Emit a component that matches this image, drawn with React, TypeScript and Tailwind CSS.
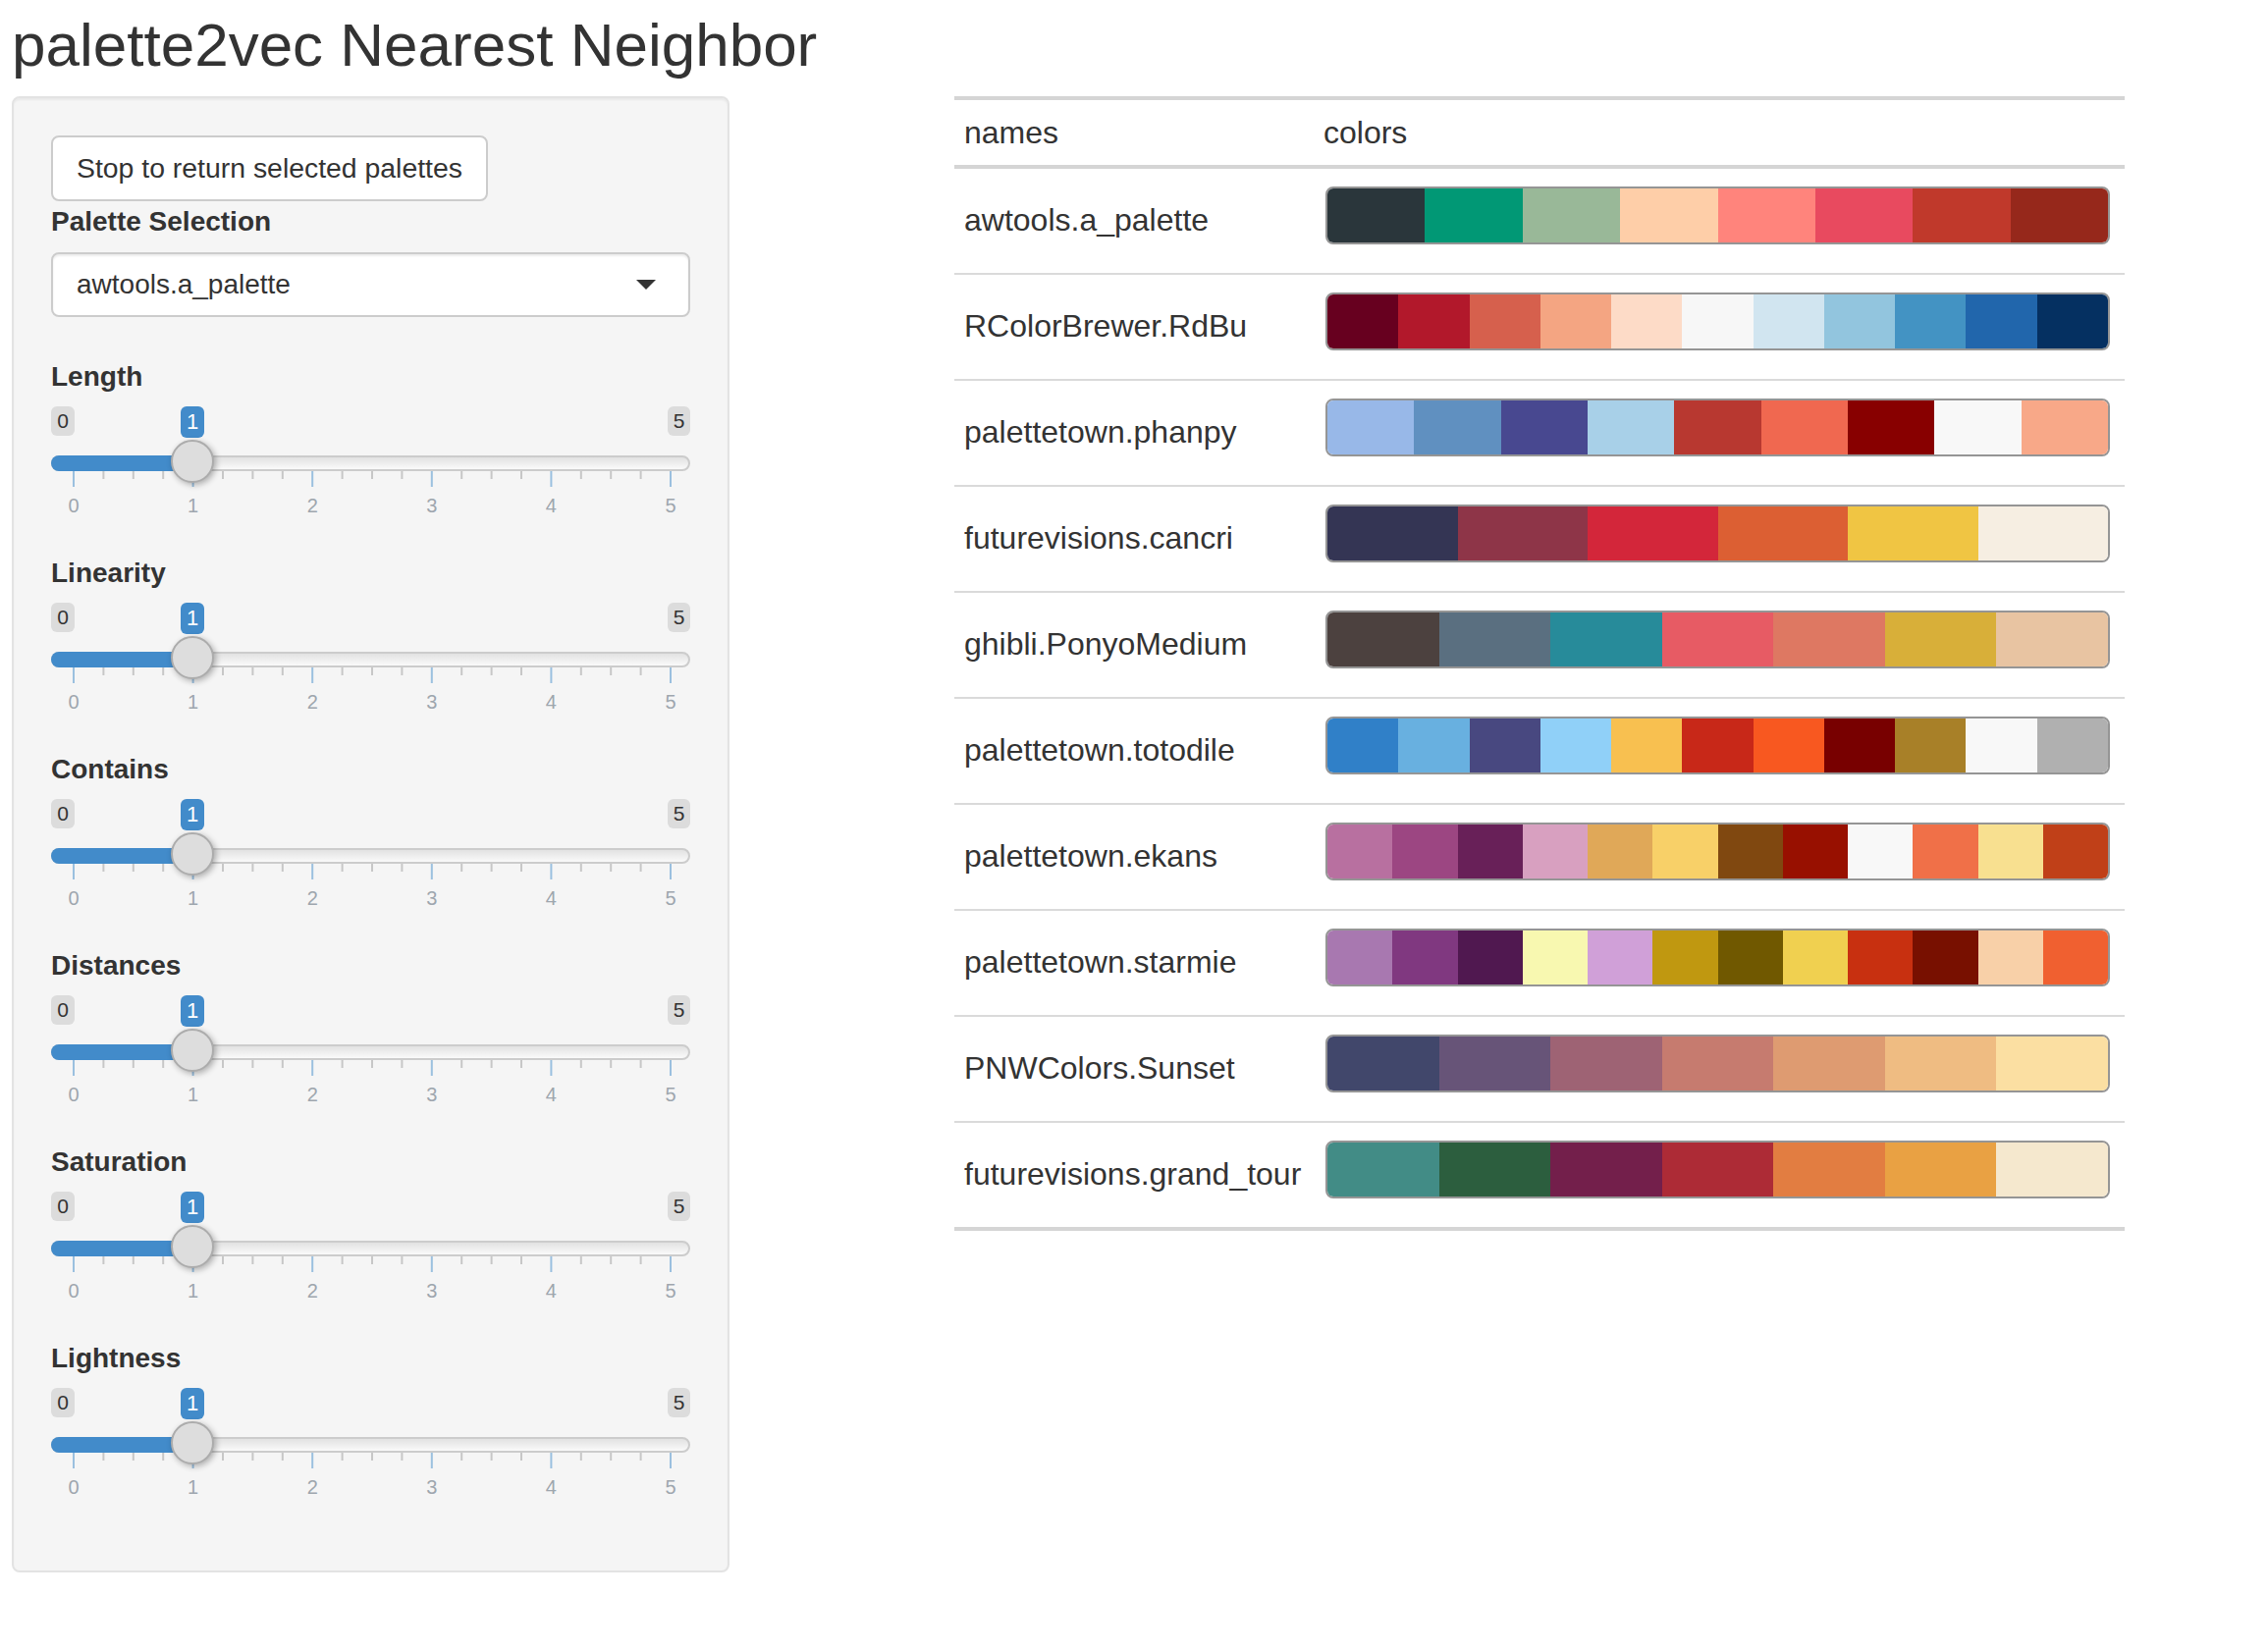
import React from "react";

const palettes: [string, string[]][] = [
  ["awtools.a_palette", ["#2A363B", "#019875", "#99B898", "#FECEA8", "#FF847C", "#E84A5F", "#C0392B", "#96281B"]],
  ["RColorBrewer.RdBu", ["#67001F", "#B2182B", "#D6604D", "#F4A582", "#FDDBC7", "#F7F7F7", "#D1E5F0", "#92C5DE", "#4393C3", "#2166AC", "#053061"]],
  ["palettetown.phanpy", ["#98B8E8", "#6090C0", "#484890", "#A8D0E8", "#B83830", "#F06850", "#880000", "#F8F8F8", "#F8A888"]],
  ["futurevisions.cancri", ["#343554", "#8E3548", "#D3263A", "#DC5F33", "#F0C543", "#F6EEE2"]],
  ["ghibli.PonyoMedium", ["#4C413F", "#5A6F80", "#278B9A", "#E75B64", "#DE7862", "#D8AF39", "#E8C4A2"]],
  ["palettetown.totodile", ["#3080C8", "#68B0E0", "#484880", "#90D0F8", "#F8C050", "#C82818", "#F85820", "#780000", "#A88028", "#F8F8F8", "#B0B0B0"]],
  ["palettetown.ekans", ["#B870A0", "#9C4682", "#682058", "#D8A0C0", "#E0A858", "#F8D068", "#804810", "#981000", "#F8F8F8", "#F07048", "#F8E090", "#C04018"]],
  ["palettetown.starmie", ["#A878B0", "#803880", "#501850", "#F8F8B0", "#D0A0D8", "#C09810", "#705800", "#F0D050", "#C83010", "#781000", "#F8D0A8", "#F06030"]],
  ["PNWColors.Sunset", ["#41476B", "#675478", "#9E6374", "#C67B6F", "#DE9B71", "#EFBC82", "#FBDFA2"]],
  ["futurevisions.grand_tour", ["#428C86", "#2C5E3E", "#731F4B", "#AD2B36", "#E27D41", "#E9A143", "#F5E8CE"]],
];

const sliders = ["Length", "Linearity", "Contains", "Distances", "Saturation", "Lightness"];

const TICK_START = 23;
const MAJOR = 121.6;

function Slider({ label }: { label: string }) {
  const ticks = Array.from({ length: 21 }, (_, k) => k);
  return (
    <div className="h-[200px]">
      <div className="mb-[10px] h-[40px] text-[28px] font-bold leading-[40px] text-[#333333]">{label}</div>
      <div className="relative h-[150px] w-[651px]">
        <div className="absolute left-0 top-0 h-[30px] w-[24px] rounded-[6px] bg-[#dcdcdc] text-center text-[21px] leading-[30px] text-[#333333]">
          0
        </div>
        <div className="absolute right-0 top-0 h-[30px] w-[23px] rounded-[6px] bg-[#dcdcdc] text-center text-[21px] leading-[30px] text-[#333333]">
          5
        </div>
        <div className="absolute left-[132px] top-0 h-[32px] w-[24px] rounded-[6px] bg-[#428bca] text-center text-[22px] leading-[32px] text-white">
          1
        </div>
        <div className="absolute left-0 right-0 top-[50px] h-[16px] rounded-full border-2 border-[#cccccc] bg-linear-to-b from-[#e2e2e2] to-[#fafafa]" />
        <div className="absolute left-0 top-[50px] h-[16px] w-[146px] rounded-l-full bg-[#428bca]" />
        <svg className="absolute left-0 top-[66px]" width={651} height={16}>
          {ticks.map((k) => {
            const x = TICK_START + k * (MAJOR / 4);
            const major = k % 4 === 0;
            return (
              <rect
                key={k}
                x={x - 1}
                y={0}
                width={2}
                height={major ? 16 : 8}
                fill={major ? "#9bc0df" : "#c7c7c7"}
              />
            );
          })}
        </svg>
        <div className="absolute left-[122px] top-[34px] h-[44px] w-[44px] rounded-full border-2 border-[#acacac] bg-[#dddddd] shadow-[2px_2px_6px_rgba(0,0,0,0.3)]" />
        {[0, 1, 2, 3, 4, 5].map((n) => (
          <div
            key={n}
            className="absolute top-[91px] w-[40px] text-center text-[20px] leading-[20px] text-[#9ea6ae]"
            style={{ left: TICK_START + n * MAJOR - 20 }}
          >
            {n}
          </div>
        ))}
      </div>
    </div>
  );
}

export default function App() {
  return (
    <div className="bg-white pl-[12px] pt-[12px] font-['Liberation_Sans',Arial,Helvetica,sans-serif] text-[#333333]">
      <h1 className="h-[68px] text-[62px] font-normal leading-[68px] text-[#333333] whitespace-nowrap">
        palette2vec Nearest Neighbor
      </h1>
      <div className="mt-[18px] flex items-start">
        <aside className="w-[731px] rounded-[8px] border-2 border-[#e3e3e3] bg-[#f5f5f5] px-[38px] pb-[36px] pt-[38px] shadow-[inset_0_2px_2px_rgba(0,0,0,0.05)]">
          <button className="flex h-[67px] w-[445px] items-center rounded-[8px] border-2 border-[#cccccc] bg-white pl-[24px] text-[28.4px] text-[#333333]">
            Stop to return selected palettes
          </button>
          <div className="mb-[11px] mt-[1px] h-[40px] text-[28px] font-bold leading-[40px]">Palette Selection</div>
          <div className="flex h-[66px] w-[651px] items-center justify-between rounded-[8px] border-2 border-[#cccccc] bg-white pl-[24px] pr-[33px] text-[28px] text-[#333333] shadow-[inset_0_2px_2px_rgba(0,0,0,0.075)]">
            <span>awtools.a_palette</span>
            <span className="h-0 w-0 border-x-[10px] border-t-[10px] border-x-transparent border-t-[#333333]" />
          </div>
          <div className="mt-[41px]">
            {sliders.map((s) => (
              <Slider key={s} label={s} />
            ))}
          </div>
        </aside>
        <main className="ml-[229px] w-[1192px] border-t-4 border-[#d5d5d5] text-[32px] text-[#333333]">
          <div className="flex h-[70px] border-b-4 border-[#d5d5d5]">
            <div className="w-[366px] pl-[10px] pt-[13px] leading-[40px]">names</div>
            <div className="pl-[10px] pt-[13px] leading-[40px]">colors</div>
          </div>
          {palettes.map(([name, cols], i) => (
            <div
              key={name}
              className={
                i === palettes.length - 1
                  ? "flex h-[110px] border-b-4 border-[#d5d5d5]"
                  : "flex h-[108px] border-b-2 border-[#dadada]"
              }
            >
              <div className="w-[366px] whitespace-nowrap pl-[10px] pt-[32px] leading-[40px]">{name}</div>
              <div className="pl-[12px] pt-[18px]">
                <div className="flex h-[59px] w-[799px] overflow-hidden rounded-[8px] border-2 border-[#959595]">
                  {cols.map((c, j) => (
                    <div key={j} className="h-full flex-1" style={{ backgroundColor: c }} />
                  ))}
                </div>
              </div>
            </div>
          ))}
        </main>
      </div>
    </div>
  );
}
